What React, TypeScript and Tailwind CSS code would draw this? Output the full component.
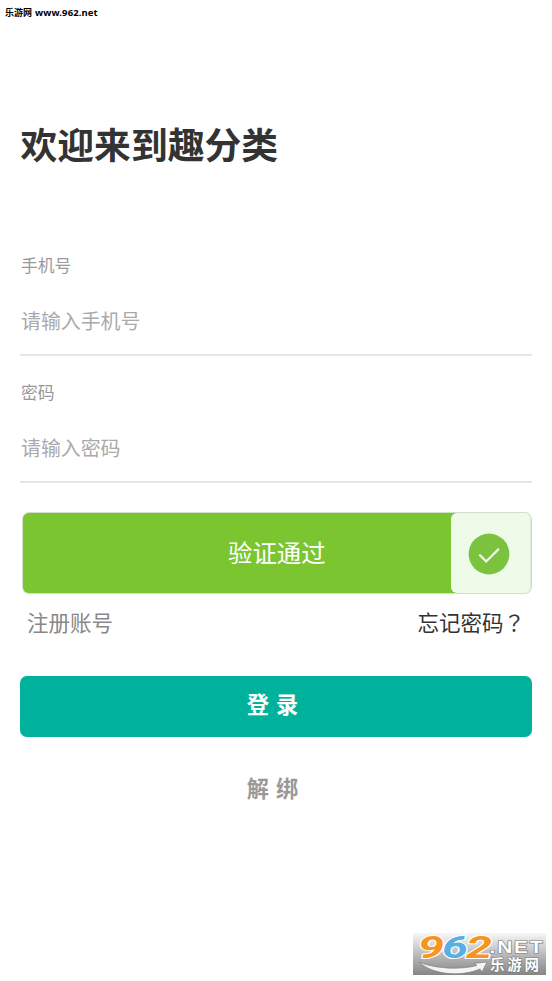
import { useState } from "react";

function Field({
    label,
    placeholder,
    type,
}: {
    label: string;
    placeholder: string;
    type: string;
}) {
    const [value, setValue] = useState("");

    return (
        <label className="block h-[127px] border-b-2 border-[#e6e6e6] pt-6">
            <span className="block h-9 pl-px text-[16.8px] leading-6 text-[#999999]">
                {label}
            </span>
            <input
                type={type}
                value={value}
                onChange={(e) => setValue(e.target.value)}
                placeholder={placeholder}
                className="block h-[62px] w-full bg-transparent pl-px text-[19.9px] text-[#333333] outline-none placeholder:text-[#aaaaaa]"
            />
        </label>
    );
}

function SlideCaptcha() {
    return (
        <div className="ml-[2px] h-[82px] rounded-[7px] bg-[#d3dfc9] p-px">
            <div className="flex h-full overflow-hidden rounded-[6px] bg-[linear-gradient(90deg,#7ac530_440px,#effbe9_440px)]">
                <div className="flex flex-1 items-center pb-[2px] pl-[205px] text-[24.4px] text-white">
                    验证通过
                </div>
                <div className="flex w-20 items-center justify-center rounded-[6px] border-r border-[#dfe4dc] bg-[#effbe9]">
                    <svg width="42" height="42" viewBox="0 0 42 42" className="-ml-[3px] mt-[2px]">
                        <circle cx="21" cy="21" r="20.4" fill="#7bc23e" />
                        <path
                            d="M12 22.2l6.2 6.3L30.3 16.4"
                            fill="none"
                            stroke="#effbe9"
                            strokeWidth="2.2"
                            strokeLinecap="round"
                        />
                    </svg>
                </div>
            </div>
        </div>
    );
}

function SiteBadge() {
    return (
        <svg
            width="133"
            height="56"
            viewBox="0 -8 133 56"
            className="absolute left-[413px] top-[925px]"
        >
            <defs>
                <linearGradient id="badge" x1="0" y1="0" x2="0" y2="1">
                    <stop offset="0" stopColor="#f7f7f7" />
                    <stop offset="0.5" stopColor="#bcbcbc" />
                    <stop offset="1" stopColor="#858585" />
                </linearGradient>
            </defs>
            <rect width="133" height="42" fill="url(#badge)" />
            <path
                d="M6 29C22 36 48 37 64 32.500L61 30.500L74 29L69 39L67 36C48 44 20 42 6 29Z"
                fill="#f5f5f5"
                stroke="#777777"
                strokeWidth="0.6"
            />
            <g
                fontFamily="Roboto, sans-serif"
                fontWeight="700"
                fontStyle="italic"
                fontSize="31"
                stroke="#ffffff"
                strokeWidth="2"
                strokeLinejoin="round"
                paintOrder="stroke"
            >
                <text x="5" y="25" textLength="26" lengthAdjust="spacingAndGlyphs" fill="#f7941d">9</text>
                <text x="29" y="25" textLength="26" lengthAdjust="spacingAndGlyphs" fill="#5aaee6">6</text>
                <text x="53" y="25" textLength="26" lengthAdjust="spacingAndGlyphs" fill="#f7941d">2</text>
            </g>
            <g
                fill="#ffffff"
                stroke="#777777"
                strokeWidth="1.2"
                paintOrder="stroke"
                fontWeight="700"
            >
                <text
                    x="76.500"
                    y="19.500"
                    fontFamily="'Liberation Sans', sans-serif"
                    fontSize="17"
                    letterSpacing="1.5"
                    textLength="55"
                    lengthAdjust="spacingAndGlyphs"
                >
                    .NET
                </text>
                <text
                    x="77"
                    y="37"
                    fontFamily="'Noto Sans CJK SC', sans-serif"
                    fontSize="14.5"
                    letterSpacing="2.8"
                >
                    乐游网
                </text>
            </g>
        </svg>
    );
}

export default function App() {
    return (
        <div className="relative h-[981px] w-[552px] overflow-hidden bg-white font-['Noto_Sans_CJK_SC',sans-serif]">
            <header className="flex h-[26px] items-center gap-[3px] pl-[5px] font-bold text-black">
                <span className="text-[9px]">乐游网</span>
                <span className="font-['Noto_Sans',sans-serif] text-[9.5px] tracking-[0.1px]">www.962.net</span>
            </header>

            <main className="px-5">
                <h1 className="h-[203px] pl-[0.5px] pt-[89px] text-[36.8px] font-bold leading-[56px] text-[#333333]">
                    欢迎来到趣分类
                </h1>

                <Field label="手机号" placeholder="请输入手机号" type="tel" />
                <Field label="密码" placeholder="请输入密码" type="password" />

                <div className="pt-[29px]">
                    <SlideCaptcha />
                </div>

                <div className="flex justify-between pl-[7px] pr-[7px] pt-3 text-[21.5px] leading-8">
                    <a className="text-[#888888]">注册账号</a>
                    <a className="text-[#333333]">
                        忘记密码
                        <span className="font-['Noto_Sans_CJK_TC',sans-serif]" lang="zh-TW">？</span>
                    </a>
                </div>

                <button className="mt-[38px] block h-[61px] w-full rounded-[7px] bg-[#00b29c] pb-[5px] pr-[7px] text-[22.2px] font-bold text-white [word-spacing:2px]">
                    登 录
                </button>
                <button className="mt-[20px] block h-[61px] w-full pr-[7px] text-[22.2px] font-bold text-[#999999] [word-spacing:2px]">
                    解 绑
                </button>
            </main>

            <SiteBadge />
        </div>
    );
}
